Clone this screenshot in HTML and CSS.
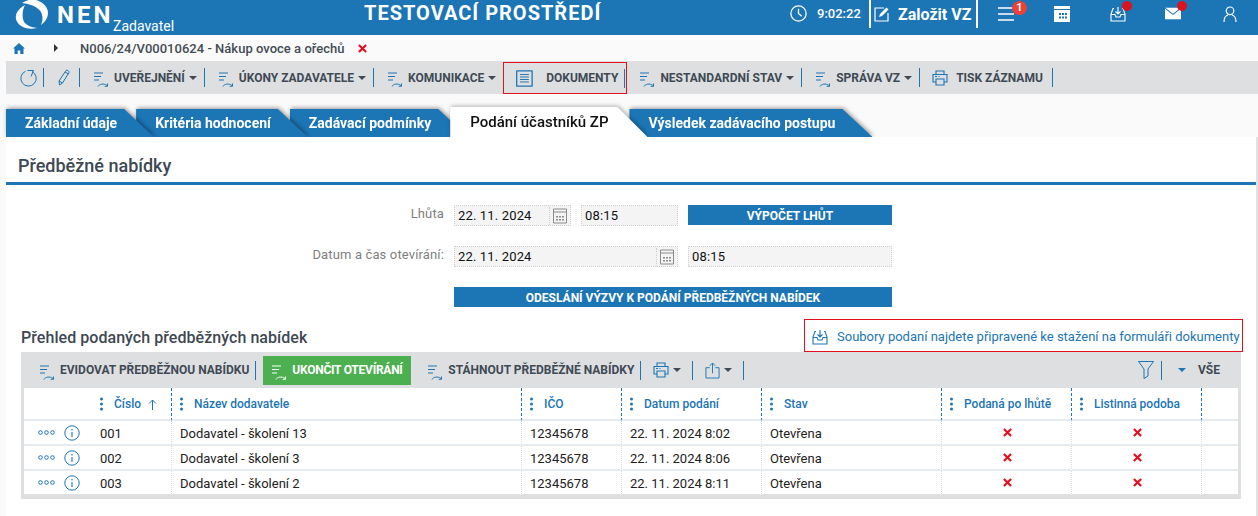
FILE: index.html
```html
<!DOCTYPE html>
<html lang="cs">
<head>
    <meta charset="UTF-8">
    <title>NEN Zadavatel</title>
    <link rel="stylesheet" href="styles.css">
</head>
<body>
    <!-- icons used more than once -->
    <svg class="defs" width="0" height="0">
        <symbol id="i-task" viewBox="0 0 15 15">
            <path d="M0 1h9M0 4.500h7M0 8h5" fill="none" stroke="currentColor"/>
            <path d="M4 14.500c1-2.500 6-3.500 9-1M13.500 11.500v2.800h-2.800" fill="none" stroke="currentColor"/>
        </symbol>
        <symbol id="i-print" viewBox="0 0 16 16">
            <path d="M4 4V1h8v3M4 12H1V4.500h14V12h-3M4 9h8v6H4zM3 6.500h2M6.500 6.500h1" fill="none" stroke="currentColor" stroke-width="1.100"/>
        </symbol>
        <symbol id="i-cal" viewBox="0 0 14 16">
            <path d="M.5 1h13v14H.5zM.5 4h13" fill="none" stroke="#8c8c8c"/>
            <path d="M3 8h2v1.500H3zM6 8h2v1.500H6zM9 8h2v1.500H9zM3 11h2v1.500H3zM6 11h2v1.500H6zM9 11h2v1.500H9z" fill="#8c8c8c"/>
        </symbol>
        <symbol id="i-inbox" viewBox="0 0 16 16">
            <path d="M4 2.500H3L1 8v7h14V8l-2-5.500h-1M1 8.500h4l1 2.500h4l1-2.500h4M8 1v6.500M5.500 5.500 8 8l2.500-2.500" fill="none" stroke="currentColor" stroke-width="1.100"/>
        </symbol>
        <symbol id="i-kebab" viewBox="0 0 3 14">
            <circle cx="1.500" cy="2" r="1.500" fill="currentColor"/>
            <circle cx="1.500" cy="7" r="1.500" fill="currentColor"/>
            <circle cx="1.500" cy="12" r="1.500" fill="currentColor"/>
        </symbol>
        <symbol id="i-x" viewBox="0 0 10 10">
            <path d="M1 1l8 8M9 1l-8 8" fill="none" stroke="#e3101f" stroke-width="2.400"/>
        </symbol>
        <symbol id="i-dots" viewBox="0 0 17 5">
            <circle cx="2.500" cy="2.500" r="1.800" fill="none" stroke="currentColor"/>
            <circle cx="8.500" cy="2.500" r="1.800" fill="none" stroke="currentColor"/>
            <circle cx="14.500" cy="2.500" r="1.800" fill="none" stroke="currentColor"/>
        </symbol>
        <symbol id="i-info" viewBox="0 0 16 16">
            <circle cx="8" cy="8" r="7.200" fill="none" stroke="currentColor"/>
            <path d="M8 7v5" stroke="currentColor" stroke-width="1.100"/>
            <circle cx="8" cy="4.700" r=".8" fill="currentColor"/>
        </symbol>
    </svg>

    <header class="top-bar">
        <svg class="logo" viewBox="15 0 34 30" width="34" height="30">
            <path d="M25 5C18 9 15 14 16 19c1 6 10 12 21 9-8-1-13-4-14-9-1-5 0-10 2-14z" fill="#fff"/>
            <path d="M22 3c5-3 9-4 14-3 8 2 12 8 12 13 0 5-3 9-7 12 2-5 2-9 0-13-3-5-10-8-19-9z" fill="#fff"/>
        </svg>
        <span class="brand">NEN</span>
        <span class="brand-role">Zadavatel</span>
        <h1 class="env-title">TESTOVACÍ PROSTŘEDÍ</h1>
        <svg class="clock" viewBox="0 0 16 16" width="17" height="17">
            <circle cx="8" cy="8" r="7.200" fill="none" stroke="#fff" stroke-width="1.200"/>
            <path d="M8 3.500V8l3 2.500" fill="none" stroke="#fff" stroke-width="1.200"/>
        </svg>
        <span class="clock-time">9:02:22</span>
        <a class="new-vz">
            <svg viewBox="0 0 16 16" width="16" height="16">
                <path d="M10 2H1v13h13V7" fill="none" stroke="#fff" stroke-width="1.200"/>
                <path d="M5 11l1-3 6.500-6.500 2 2L8 10z" fill="#fff"/>
            </svg>
            Založit VZ
        </a>
        <div class="top-icon first">
            <svg viewBox="0 0 16 14" width="16" height="14"><path d="M0 1h16M0 7h16M0 13h16" stroke="#fff" stroke-width="1.400"/></svg>
            <span class="badge">1</span>
        </div>
        <div class="top-icon">
            <svg viewBox="0 0 16 16" width="16" height="16">
                <path d="M0 0h16v16H0z" fill="#fff"/>
                <path d="M0 3.500h16" stroke="#1c75b5"/>
                <path d="M5 7h2v2H5zM8 7h2v2H8zM11 7h2v2h-2zM5 10.500h2v2H5zM8 10.500h2v2H8zM11 10.500h2v2h-2z" fill="#1c75b5"/>
            </svg>
        </div>
        <div class="top-icon">
            <svg width="16" height="16"><use href="#i-inbox"/></svg>
            <span class="dot"></span>
        </div>
        <div class="top-icon mail">
            <svg viewBox="0 0 18 13" width="18" height="13">
                <path d="M0 0h18v13H0z" fill="#fff"/>
                <path d="M0 .5l9 7 9-7" fill="none" stroke="#1c75b5" stroke-width="1.200"/>
            </svg>
            <span class="dot"></span>
        </div>
        <div class="top-icon user">
            <svg viewBox="0 0 14 16" width="14" height="16">
                <circle cx="7" cy="4.800" r="3.800" fill="none" stroke="#fff" stroke-width="1.200"/>
                <path d="M1 16c0-4 2-6.500 4-7M13 16c0-4-2-6.500-4-7" fill="none" stroke="#fff" stroke-width="1.200"/>
            </svg>
        </div>
    </header>

    <nav class="crumbs">
        <svg class="home" viewBox="0 0 12 11" width="12" height="11"><path d="M6 0l6 5.500h-1.500V11H7.300V7.500H4.700V11H1.500V5.500H0z" fill="#1c75b5"/></svg>
        <span class="crumb-arrow"></span>
        <span class="crumb-text">N006/24/V00010624 - Nákup ovoce a ořechů</span>
        <svg class="crumb-x" width="9" height="9"><use href="#i-x"/></svg>
    </nav>

    <div class="toolbar">
        <svg class="tb-refresh" viewBox="0 0 17 18" width="17" height="18">
            <path d="M5.500 2.300a7.700 7.700 0 1 0 6.500.2M7.500 1.500h6L11 7.500" fill="none" stroke="currentColor"/>
        </svg>
        <span class="sep"></span>
        <svg class="tb-pencil" viewBox="0 0 12 17" width="12" height="17">
            <path d="M1.500 16 1 12 8 1.500c1-1 3.500.500 3 2L4.500 14zM1 12l3.500 2M7 3l3.500 2" fill="none" stroke="currentColor" stroke-width="1"/>
        </svg>
        <span class="sep"></span>
        <a class="tb-item"><svg class="task" width="15" height="15"><use href="#i-task"/></svg><b>Uveřejnění</b><i class="caret"></i></a>
        <span class="sep"></span>
        <a class="tb-item"><svg class="task" width="15" height="15"><use href="#i-task"/></svg><b>Úkony zadavatele</b><i class="caret"></i></a>
        <span class="sep"></span>
        <a class="tb-item"><svg class="task" width="15" height="15"><use href="#i-task"/></svg><b>Komunikace</b><i class="caret"></i></a>
        <div class="tb-marked">
            <svg viewBox="0 0 17 17" width="17" height="17">
                <path d="M1 .7h15a.5.5 0 0 1 .3.3v15a.5.5 0 0 1-.3.3H1a.5.5 0 0 1-.3-.3V1a.5.5 0 0 1 .3-.3z" fill="none" stroke="currentColor" stroke-width="1.300"/>
                <path d="M4 4.500h9M4 7h9M4 9.500h9M4 12h9" stroke="currentColor"/>
            </svg>
            <b>Dokumenty</b>
            <span class="sep"></span>
        </div>
        <a class="tb-item"><svg class="task" width="15" height="15"><use href="#i-task"/></svg><b>Nestandardní stav</b><i class="caret"></i></a>
        <span class="sep"></span>
        <a class="tb-item"><svg class="task" width="15" height="15"><use href="#i-task"/></svg><b>Správa VZ</b><i class="caret"></i></a>
        <span class="sep"></span>
        <a class="tb-item print"><svg width="16" height="16"><use href="#i-print"/></svg><b>Tisk záznamu</b></a>
        <span class="sep"></span>
    </div>

    <div class="tabs">
        <a class="tab t1"><span>Základní údaje</span></a>
        <a class="tab t2"><span>Kritéria hodnocení</span></a>
        <a class="tab t3"><span>Zadávací podmínky</span></a>
        <a class="tab t4 active"><span>Podání účastníků ZP</span></a>
        <a class="tab t5"><span>Výsledek zadávacího postupu</span></a>
    </div>

    <main class="panel">
        <h2 class="panel-title">Předběžné nabídky</h2>

        <div class="form-row">
            <label class="form-label">Lhůta</label>
            <div class="field w117"><span>22. 11. 2024</span><svg width="14" height="16"><use href="#i-cal"/></svg></div>
            <div class="field w97"><span>08:15</span></div>
            <button class="btn w204">VÝPOČET LHŮT</button>
        </div>
        <div class="form-row">
            <label class="form-label">Datum a čas otevírání:</label>
            <div class="field w224"><span>22. 11. 2024</span><svg width="14" height="16"><use href="#i-cal"/></svg></div>
            <div class="field w204"><span>08:15</span></div>
        </div>
        <div class="form-row">
            <button class="btn w438">ODESLÁNÍ VÝZVY K PODÁNÍ PŘEDBĚŽNÝCH NABÍDEK</button>
        </div>

        <div class="section-head">
            <h3>Přehled podaných předběžných nabídek</h3>
            <a class="doc-note">
                <svg width="16" height="16"><use href="#i-inbox"/></svg>
                Soubory podaní najdete připravené ke stažení na formuláři dokumenty
            </a>
        </div>

        <div class="grid-box">
            <div class="grid-tools">
                <a class="tb-item first"><svg class="task" width="15" height="15"><use href="#i-task"/></svg><b>Evidovat předběžnou nabídku</b></a>
                <span class="sep"></span>
                <a class="green-btn"><svg class="task" width="15" height="15"><use href="#i-task"/></svg><b>Ukončit otevírání</b></a>
                <a class="tb-item download"><svg class="task" width="15" height="15"><use href="#i-task"/></svg><b>Stáhnout předběžné nabídky</b></a>
                <span class="sep"></span>
                <a class="tb-item icon-only"><svg width="16" height="16"><use href="#i-print"/></svg><i class="caret"></i></a>
                <span class="sep"></span>
                <a class="tb-item icon-only"><svg viewBox="0 0 16 18" width="15" height="17"><path d="M5 6H1v11h14V6h-4M8 12V1M5 4l3-3 3 3" fill="none" stroke="currentColor" stroke-width="1"/></svg><i class="caret"></i></a>
                <span class="sep"></span>
                <svg class="filter" viewBox="0 0 16 18" width="16" height="18"><path d="M.5 .5h15L10 8v7l-4 2.500V8z" fill="none" stroke="currentColor"/></svg>
                <span class="sep"></span>
                <i class="caret blue"></i>
                <b class="all">VŠE</b>
            </div>
            <table class="grid">
                <colgroup>
                    <col class="c-act"><col class="c-num"><col class="c-name"><col class="c-ico"><col class="c-date"><col class="c-state"><col class="c-late"><col class="c-paper"><col class="c-rest">
                </colgroup>
                <thead>
                    <tr>
                        <th class="plain"></th>
                        <th class="plain"><svg class="kebab" width="3" height="14"><use href="#i-kebab"/></svg>Číslo<svg class="sort" viewBox="0 0 9 11" width="9" height="11"><path d="M4.500 11V1M1 4.500 4.500 1 8 4.500" fill="none" stroke="currentColor"/></svg></th>
                        <th><svg class="kebab" width="3" height="14"><use href="#i-kebab"/></svg>Název dodavatele</th>
                        <th><svg class="kebab" width="3" height="14"><use href="#i-kebab"/></svg>IČO</th>
                        <th><svg class="kebab" width="3" height="14"><use href="#i-kebab"/></svg>Datum podání</th>
                        <th><svg class="kebab" width="3" height="14"><use href="#i-kebab"/></svg>Stav</th>
                        <th><svg class="kebab" width="3" height="14"><use href="#i-kebab"/></svg>Podaná po lhůtě</th>
                        <th><svg class="kebab" width="3" height="14"><use href="#i-kebab"/></svg>Listinná podoba</th>
                        <th></th>
                    </tr>
                </thead>
                <tbody>
                    <tr>
                        <td class="acts"><svg width="17" height="5"><use href="#i-dots"/></svg><svg width="16" height="16"><use href="#i-info"/></svg></td>
                        <td class="plain">001</td>
                        <td>Dodavatel - školení 13</td>
                        <td>12345678</td>
                        <td>22. 11. 2024 8:02</td>
                        <td>Otevřena</td>
                        <td class="mark"><svg width="9" height="9"><use href="#i-x"/></svg></td>
                        <td class="mark"><svg width="9" height="9"><use href="#i-x"/></svg></td>
                        <td></td>
                    </tr>
                    <tr>
                        <td class="acts"><svg width="17" height="5"><use href="#i-dots"/></svg><svg width="16" height="16"><use href="#i-info"/></svg></td>
                        <td class="plain">002</td>
                        <td>Dodavatel - školení 3</td>
                        <td>12345678</td>
                        <td>22. 11. 2024 8:06</td>
                        <td>Otevřena</td>
                        <td class="mark"><svg width="9" height="9"><use href="#i-x"/></svg></td>
                        <td class="mark"><svg width="9" height="9"><use href="#i-x"/></svg></td>
                        <td></td>
                    </tr>
                    <tr>
                        <td class="acts"><svg width="17" height="5"><use href="#i-dots"/></svg><svg width="16" height="16"><use href="#i-info"/></svg></td>
                        <td class="plain">003</td>
                        <td>Dodavatel - školení 2</td>
                        <td>12345678</td>
                        <td>22. 11. 2024 8:11</td>
                        <td>Otevřena</td>
                        <td class="mark"><svg width="9" height="9"><use href="#i-x"/></svg></td>
                        <td class="mark"><svg width="9" height="9"><use href="#i-x"/></svg></td>
                        <td></td>
                    </tr>
                </tbody>
            </table>
        </div>
    </main>
</body>
</html>
```

FILE: styles.css
```css
* {
    box-sizing: border-box;
}

html, body {
    height: 100%;
}

body {
    margin: 0;
    font-family: Roboto, "Liberation Sans", sans-serif;
    font-size: 13px;
    color: #222;
    background-color: #fafafa;
    display: flex;
    flex-direction: column;
    overflow: hidden;
}

.defs {
    display: none;
}

/* top blue bar */
.top-bar {
    height: 35px;
    flex: none;
    display: flex;
    align-items: center;
    background-color: #1c75b5;
    color: #fff;
    overflow: hidden;
}

.logo {
    margin: -5px 0 0 15px;
    flex: none;
}

.brand {
    margin: -6px 0 0 8px;
    width: 56px;
    font-size: 24px;
    font-weight: 700;
    letter-spacing: 3px;
}

.brand-role {
    margin-top: 16px;
    width: 251px;
    font-size: 14px;
}

.env-title {
    margin: -9px 0 0 0;
    width: 426px;
    font-size: 20px;
    font-weight: 700;
    letter-spacing: 1px;
    white-space: nowrap;
}

.clock {
    flex: none;
    margin: -8px 10px 0 0;
}

.clock-time {
    width: 52px;
    margin-top: -9px;
    font-weight: 500;
}

.new-vz {
    height: 28px;
    margin-top: -7px;
    width: 109px;
    display: flex;
    align-items: center;
    gap: 8px;
    padding-left: 3px;
    border-left: 2px solid #fff;
    border-right: 2px solid #fff;
    font-size: 16px;
    font-weight: 700;
    white-space: nowrap;
}

.top-icon {
    position: relative;
    width: 16px;
    height: 16px;
    margin: -8px 0 0 40px;
    display: flex;
    align-items: center;
    color: #fff;
}

.top-icon.first {
    margin-left: 20px;
}

.top-icon.mail {
    margin-left: 39px;
}

.top-icon.user {
    margin-left: 42px;
}

.badge {
    position: absolute;
    top: -5px;
    left: 14px;
    width: 15px;
    height: 14px;
    border-radius: 50%;
    background-color: #ee4035;
    font-size: 11px;
    font-weight: 700;
    line-height: 14px;
    text-align: center;
}

.dot {
    position: absolute;
    top: -5px;
    left: 12px;
    width: 10px;
    height: 10px;
    border-radius: 50%;
    background-color: #d9141e;
}

/* breadcrumb */
.crumbs {
    height: 26px;
    flex: none;
    display: flex;
    align-items: center;
    padding-left: 13px;
}

.crumb-arrow {
    margin-left: 29px;
    border-left: 4px solid #333;
    border-top: 4px solid transparent;
    border-bottom: 4px solid transparent;
}

.crumb-text {
    margin-left: 22px;
    font-weight: 500;
    color: #444c54;
    white-space: nowrap;
    letter-spacing: .02px;
}

.crumb-x {
    margin-left: 13px;
}

/* main toolbar */
.toolbar {
    height: 33px;
    flex: none;
    margin-left: 6px;
    padding-left: 14px;
    display: flex;
    align-items: center;
    background-color: #dedfe1;
    color: #1c75b5;
}

.sep {
    flex: none;
    width: 1px;
    height: 19px;
    margin-right: 1px;
    background-color: #1c75b5;
}

.tb-refresh {
    margin-right: 6px;
}

.tb-pencil {
    margin: 0 9px 0 13px;
}

.tb-item {
    display: flex;
    align-items: center;
    color: #1c75b5;
    padding: 0 7px 0 13px;
}

.tb-item b {
    margin-left: 5px;
    font-size: 12px;
    font-weight: 700;
    text-transform: uppercase;
    color: #3f4a55;
    white-space: nowrap;
}

.tb-item svg {
    flex: none;
}

svg.task {
    margin-top: 4px;
}

.caret {
    margin-left: 4px;
    border-top: 4px solid #3f4a55;
    border-left: 4px solid transparent;
    border-right: 4px solid transparent;
}

.tb-marked {
    width: 124px;
    height: 32px;
    margin-top: 1px;
    padding-left: 12px;
    display: flex;
    align-items: center;
    border: 1px solid #e3101f;
    background-color: #dedfe1;
}

.tb-marked b {
    margin-left: 13px;
    width: 79px;
    font-size: 12px;
    font-weight: 700;
    text-transform: uppercase;
    color: #3f4a55;
}

.tb-item.print {
    padding: 0 9px 0 11px;
}

.tb-item.print b {
    margin-left: 8px;
}

/* tabs */
.tabs {
    height: 43px;
    flex: none;
    display: flex;
    align-items: flex-end;
    padding-left: 6px;
    overflow: hidden;
}

.tab {
    position: relative;
    display: block;
    height: 28px;
    margin-right: -18px;
    filter: drop-shadow(1px -1px 2px rgba(0, 0, 0, .4));
}

.tab span {
    display: block;
    height: 100%;
    padding: 0 37px 0 19px;
    line-height: 29px;
    font-size: 14px;
    font-weight: 700;
    color: #fff;
    background-color: #1c75b5;
    clip-path: polygon(0 0, calc(100% - 30px) 0, 100% 100%, 0 100%);
    white-space: nowrap;
}

.t1 { z-index: 5; }
.t2 { z-index: 4; }
.t3 { z-index: 3; }
.t5 { z-index: 1; }

.tab.active {
    z-index: 6;
    height: 30px;
    filter: drop-shadow(1px -1px 2px rgba(0, 0, 0, .3));
}

.tab.active span {
    line-height: 30px;
    padding: 0 39px 0 20px;
    font-size: 15px;
    font-weight: 500;
    color: #111;
    background-color: #fff;
}

/* content panel */
.panel {
    flex: 1;
    margin-left: 6px;
    border-right: 2px solid #e2e2e2;
    background-color: #fff;
}

.panel-title {
    height: 48px;
    margin: 0 0 20px;
    padding: 17px 0 0 12px;
    border-bottom: 3px solid #1c75b5;
    font-size: 18px;
    line-height: 24px;
    font-weight: 500;
    color: #3d4852;
}

.form-row {
    height: 21px;
    margin-bottom: 20px;
    padding-left: 448px;
    display: flex;
    gap: 10px;
}

.form-label {
    margin-left: -448px;
    width: 438px;
    text-align: right;
    line-height: 18px;
    color: #808080;
    letter-spacing: .14px;
}

.field {
    height: 21px;
    display: flex;
    align-items: center;
    justify-content: space-between;
    padding: 0 0 0 3px;
    border: 1px dotted #cfcfcf;
    background-color: #f4f4f4;
    color: #111;
    letter-spacing: .15px;
}

.field svg {
    box-sizing: content-box;
    padding: 1px 3px 1px 3px;
    border-left: 1px dotted #cfcfcf;
}

.w97 { width: 97px; }
.w117 { width: 117px; }
.w204 { width: 204px; }
.w224 { width: 224px; }
.w438 { width: 438px; }

.btn {
    height: 20px;
    border: none;
    padding: 1px 0 0;
    background-color: #1c75b5;
    color: #fff;
    font-family: inherit;
    font-size: 12px;
    font-weight: 700;
}

.section-head {
    height: 33px;
    margin: -9px 15px 0 15px;
    display: flex;
    justify-content: space-between;
    align-items: flex-end;
}

.section-head h3 {
    margin: 0 0 5px;
    font-size: 16px;
    font-weight: 500;
    color: #3d4852;
    letter-spacing: .05px;
}

.doc-note {
    width: 439px;
    height: 33px;
    margin-right: -2px;
    padding: 2px 0 0 7px;
    display: flex;
    align-items: center;
    gap: 9px;
    border: 1px solid #e3101f;
    color: #1c75b5;
    white-space: nowrap;
}

.grid-box {
    margin: 0 15px;
    border: 3px solid #dedfe1;
    border-top: none;
}

.grid-tools {
    height: 36px;
    margin: 0 -3px;
    display: flex;
    align-items: center;
    background-color: #dedfe1;
    color: #1c75b5;
}

.grid-tools .tb-item.first {
    padding: 0 6px 0 19px;
}

.grid-tools .green-btn {
    margin-left: 6px;
    width: 148px;
    height: 29px;
    padding-left: 9px;
    display: flex;
    align-items: center;
    gap: 5px;
    background-color: #4caf50;
    color: #fff;
}

.green-btn b {
    font-size: 12px;
    text-transform: uppercase;
    white-space: nowrap;
    letter-spacing: -.25px;
}

.grid-tools .tb-item.download {
    padding: 0 6px 0 17px;
}

.grid-tools .tb-item.icon-only {
    padding: 0 11px;
}

.filter {
    margin: 0 7px 0 auto;
}

.caret.blue {
    margin: 0 12px 0 15px;
    border-top-color: #1c75b5;
}

.all {
    margin-right: 21px;
    font-size: 12px;
    color: #3f4a55;
}

/* table */
.grid {
    width: 1214px;
    table-layout: fixed;
    border-collapse: separate;
    border-spacing: 0;
    background-color: #fff;
}

.c-act { width: 68px; }
.c-num { width: 79px; }
.c-name { width: 350px; }
.c-ico { width: 100px; }
.c-date { width: 140px; }
.c-state { width: 180px; }
.c-late { width: 130px; }
.c-paper { width: 130px; }
.c-rest { width: 37px; }

.grid th {
    height: 33px;
    padding: 0 0 0 8px;
    border-left: 1px dashed #1c75b5;
    border-bottom: 2px solid #e6ebef;
    text-align: left;
    font-size: 12px;
    font-weight: 500;
    color: #1c75b5;
    white-space: nowrap;
}

.kebab {
    margin-right: 11px;
    vertical-align: -3px;
}

.sort {
    margin-left: 7px;
    vertical-align: -2px;
}

.grid td {
    height: 25px;
    padding: 2px 0 0 8px;
    border-left: 1px dotted #d5dce2;
    border-bottom: 2px solid #e6ebef;
    white-space: nowrap;
}

.grid th.plain, .grid td.plain, .grid td.acts {
    border-left: none;
}

.grid td.acts {
    padding: 0 0 0 14px;
    color: #1c75b5;
}

.acts svg {
    vertical-align: middle;
}

.acts svg + svg {
    margin-left: 9px;
}

.grid td.mark {
    padding: 0 0 0 1px;
}

.mark svg {
    display: block;
    margin: 0 auto;
}

.grid tbody tr:last-child td {
    border-bottom-color: #dedfe1;
}
```
